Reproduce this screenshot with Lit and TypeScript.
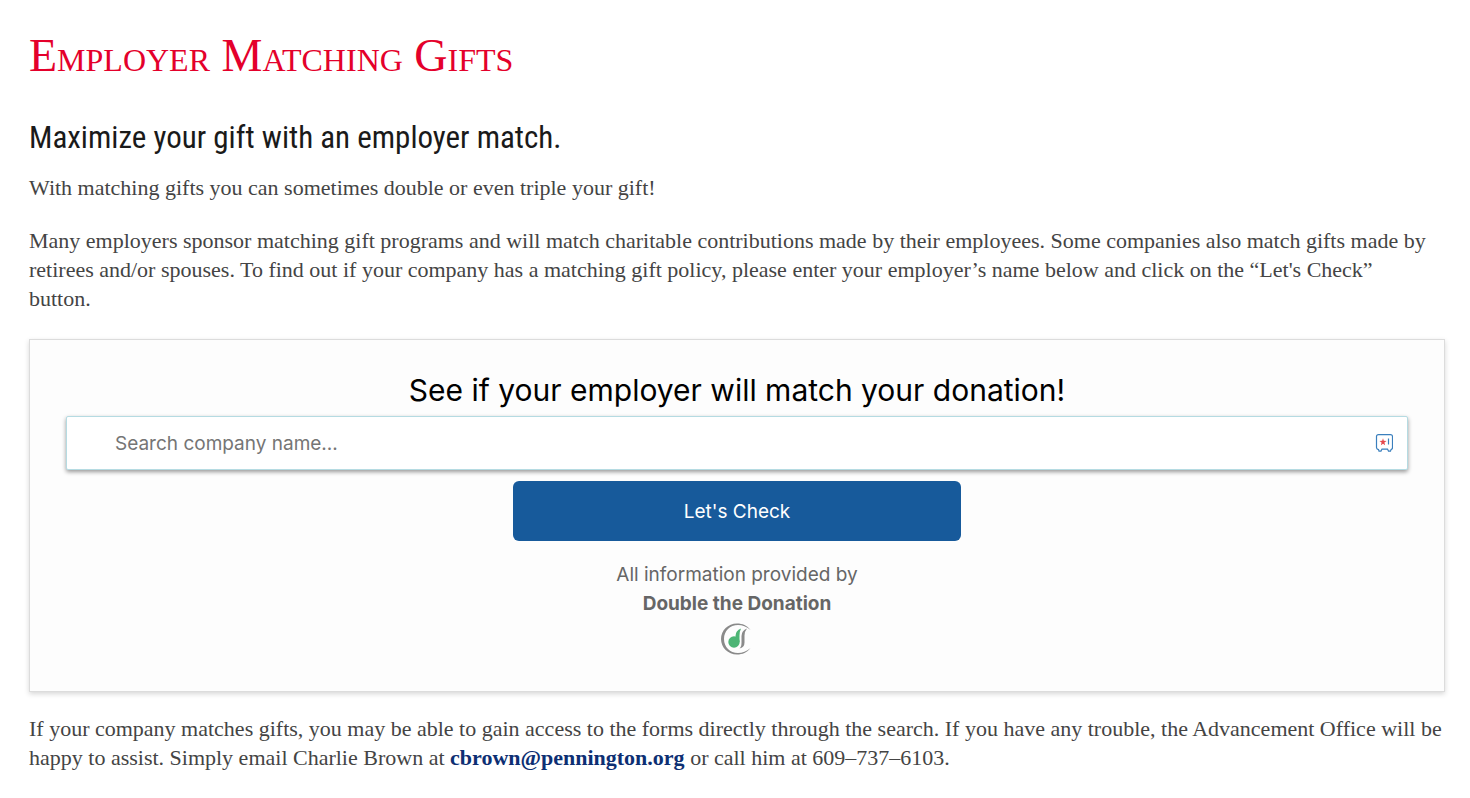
import { LitElement, html, css } from "lit";
import { customElement, state } from "lit/decorators.js";

@customElement("match-search")
class MatchSearch extends LitElement {
  @state() private company = "";

  static styles = css`
    :host {
      display: block;
      font-family: Inter, "Liberation Sans", sans-serif;
      font-size: 19px;
      line-height: 29px;
      color: #666;
    }
    .panel {
      display: flex;
      flex-direction: column;
      align-items: center;
      padding: 32px 36px 36px;
      border: 1px solid #dcdcdc;
      background: #fdfdfd;
      box-shadow: 0 2px 5px rgba(0, 0, 0, 0.16);
    }
    .title {
      font-size: 30px;
      font-weight: 400;
      line-height: 36px;
      color: #000;
      margin: 0 0 8px;
      text-align: center;
    }
    .field {
      display: flex;
      align-items: center;
      align-self: stretch;
      box-sizing: border-box;
      height: 54px;
      padding: 0 14px 0 48px;
      border: 1px solid #b5dbe2;
      border-radius: 2px;
      background: #fff;
      box-shadow: 0 2px 4px rgba(0, 0, 0, 0.4);
    }
    .input {
      flex: 1;
      min-width: 0;
      padding: 0;
      border: 0;
      outline: 0;
      background: transparent;
      font: inherit;
      color: #333;
    }
    .input::placeholder {
      color: #757575;
      opacity: 1;
    }
    .check {
      width: 33.333%;
      min-width: 200px;
      height: 60px;
      margin: 11px 0 19px;
      border: 0;
      border-radius: 6px;
      background: #175a9b;
      color: #fff;
      font: inherit;
      cursor: pointer;
    }
    .credit {
      margin: 0;
      text-align: center;
    }
    .name {
      display: block;
      font-weight: 700;
      color: inherit;
      text-decoration: none;
    }
    .logo {
      display: block;
      margin-top: 5px;
    }
    .vault {
      display: block;
      flex: none;
    }
  `;

  render() {
    return html`
      <form class="panel" @submit=${(e: Event) => e.preventDefault()}>
        <label class="title" for="company">See if your employer will match your donation!</label>
        <div class="field">
          <input
            class="input"
            id="company"
            type="text"
            placeholder="Search company name..."
            .value=${this.company}
            @input=${(e: Event) => (this.company = (e.target as HTMLInputElement).value)}
          />
          <svg class="vault" width="18" height="18" viewBox="0 0 18 18" fill="none" aria-hidden="true">
            <path
              d="M3.500 .600h12q2 0 2 2v11q0 1.500-1.500 2l-.5 1.500h-2l-1-2H7l-1 2H4l-.5-1.500Q1.500 15 1.500 13.500V2.600q0-2 2-2z"
              stroke="#3a7fbd"
              stroke-width="1.200"
            />
            <path
              d="M8 4.300l.8 2.500 2.700.1-2.100 1.600.7 2.700L8 9.700l-2.100 1.500.7-2.700-2.100-1.600 2.700-.1z"
              fill="#e5484d"
            />
            <path d="M13.500 4.500v6" stroke="#3a7fbd" stroke-width="1.200" />
          </svg>
        </div>
        <button class="check" type="submit">Let's Check</button>
        <p class="credit">
          All information provided by
          <a class="name" href="#">Double the Donation</a>
        </p>
        <svg class="logo" width="32" height="32" viewBox="0 0 32 32" aria-hidden="true">
          <path
            d="M29.500 7C26 2.500 21.500.5 16 .5 7 .5 0 7.500 0 16s7 15.500 16 15.500c5.500 0 10-2 13.500-6.500-4 3.500-8 5-12.500 5C9 30 3 24 3 16S9 2 17 2c4.500 0 8.500 1.500 12.500 5z"
            fill="#8a8a8a"
          />
          <circle cx="13" cy="19" r="5.700" fill="#4db575" />
          <path d="M14.500 19V13q0-5.500 5.500-7.500-1.500 3-1.500 7V19z" fill="#4db575" />
          <path d="M18.500 25.500q2-1.500 2-6V13q0-5.500 5.500-7.500-2.500 3-2.500 7v7q0 5-5 6z" fill="#8a8a8a" />
        </svg>
      </form>
    `;
  }
}

@customElement("app-root")
class AppRoot extends LitElement {
  static styles = css`
    :host {
      display: block;
      background: #fff;
      font-family: "Liberation Serif", serif;
      font-size: 22px;
      line-height: 29px;
      color: #444;
    }
    .page {
      padding: 28px 25px 28px 29px;
    }
    .heading {
      margin: 0;
      font-size: 46px;
      font-weight: 400;
      font-variant: small-caps;
      line-height: 56px;
      color: #e4002b;
    }
    .subheading {
      margin: 30px 0 11px;
      font-family: "Roboto Condensed", "Liberation Sans Narrow", sans-serif;
      font-size: 31px;
      font-weight: 400;
      line-height: 48px;
      color: #1a1a1a;
    }
    .text {
      margin: 0 0 24px;
    }
    .intro {
      padding-right: 12px;
    }
    .link {
      font-weight: 700;
      color: #0d2f73;
      text-decoration: none;
    }
    .search {
      margin: 26px 0 22px;
    }
  `;

  render() {
    return html`
      <main class="page">
        <h1 class="heading">Employer Matching Gifts</h1>
        <h2 class="subheading">Maximize your gift with an employer match.</h2>
        <p class="text">With matching gifts you can sometimes double or even triple your gift!</p>
        <p class="text intro">
          Many employers sponsor matching gift programs and will match charitable contributions made by their
          employees. Some companies also match gifts made by retirees and/or spouses. To find out if your company has
          a matching gift policy, please enter your employer’s name below and click on the “Let's Check” button.
        </p>
        <match-search class="search"></match-search>
        <p class="text">
          If your company matches gifts, you may be able to gain access to the forms directly through the search. If
          you have any trouble, the Advancement Office will be happy to assist. Simply email Charlie Brown at
          <a class="link" href="mailto:cbrown@pennington.org">cbrown@pennington.org</a> or call him at 609–737–6103.
        </p>
      </main>
    `;
  }
}
